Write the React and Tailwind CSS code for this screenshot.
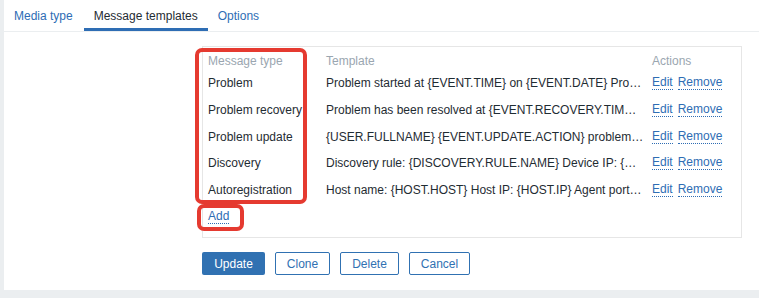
import React from 'react';

const rows = [
  { type: 'Problem', tpl: 'Problem started at {EVENT.TIME} on {EVENT.DATE} Problem name: {EVENT.NAME} Host: {HOST.NAME}' },
  { type: 'Problem recovery', tpl: 'Problem has been resolved at {EVENT.RECOVERY.TIME} on {EVENT.RECOVERY.DATE}' },
  { type: 'Problem update', tpl: '{USER.FULLNAME} {EVENT.UPDATE.ACTION} problem at {EVENT.UPDATE.DATE}' },
  { type: 'Discovery', tpl: 'Discovery rule: {DISCOVERY.RULE.NAME} Device IP: {DISCOVERY.DEVICE.IPADDRESS}' },
  { type: 'Autoregistration', tpl: 'Host name: {HOST.HOST} Host IP: {HOST.IP} Agent port: {HOST.PORT}' },
];

function Link({ children }) {
  return (
    <span className="text-[#2e6db4] leading-[13px] border-b border-dotted border-[#2e6db4] cursor-pointer">
      {children}
    </span>
  );
}

export default function App() {
  return (
    <div className="w-[759px] h-[298px] bg-[#ebeef0] pl-[4px] text-[12px] text-[#1f2c33] font-['Liberation_Sans',Arial,sans-serif]">
      <div className="bg-white h-[290px]">
        {/* Tabs */}
        <div className="flex h-[32px] border-b border-[#ebeef0]">
          <div className="px-[10px] h-[31px] flex items-center text-[#2e6db4]">Media type</div>
          <div className="ml-[1px] px-[10px] h-[31px] flex items-center border-b-[3px] border-[#2e6db4] pt-[3px]">Message templates</div>
          <div className="px-[10px] h-[31px] flex items-center text-[#2e6db4]">Options</div>
        </div>

        <div className="pl-[198px] pt-[14px]">
          {/* Templates table */}
          <div className="relative w-[540px] border border-[#e6e6e6] pt-[4px] pb-[7px]">
            <div className="grid grid-cols-[118px_326px_1fr] h-[19px] items-center text-[#9aa6b0]">
              <div className="pl-[5px]">Message type</div>
              <div className="pl-[5px]">Template</div>
              <div className="pl-[5px]">Actions</div>
            </div>
            {rows.map((r) => (
              <div key={r.type} className="grid grid-cols-[118px_326px_1fr] h-[26.7px] items-center">
                <div className="pl-[5px] whitespace-nowrap">{r.type}</div>
                <div className="pl-[5px] pr-[3px] whitespace-nowrap overflow-hidden text-ellipsis">{r.tpl}</div>
                <div className="pl-[5px] flex gap-[5px] whitespace-nowrap">
                  <Link>Edit</Link>
                  <Link>Remove</Link>
                </div>
              </div>
            ))}
            <div className="h-[26.7px] flex items-center pl-[5px]">
              <Link>Add</Link>
            </div>

            {/* annotation boxes */}
            <div className="absolute left-[-8px] top-[1px] w-[112px] h-[156px] border-[4px] border-[#e53a30] rounded-[7px] pointer-events-none" />
            <div className="absolute left-[-6px] top-[157px] w-[47px] h-[27px] border-[4px] border-[#e53a30] rounded-[7px] pointer-events-none" />
          </div>

          {/* Buttons */}
          <div className="flex gap-[10px] mt-[14px]">
            <button className="h-[23px] w-[63px] bg-[#3071b2] text-white rounded-[2px]">Update</button>
            <button className="h-[23px] w-[55px] border border-[#3071b2] text-[#3071b2] rounded-[2px]">Clone</button>
            <button className="h-[23px] w-[59px] border border-[#3071b2] text-[#3071b2] rounded-[2px]">Delete</button>
            <button className="h-[23px] w-[61px] border border-[#3071b2] text-[#3071b2] rounded-[2px]">Cancel</button>
          </div>
        </div>
      </div>
    </div>
  );
}
